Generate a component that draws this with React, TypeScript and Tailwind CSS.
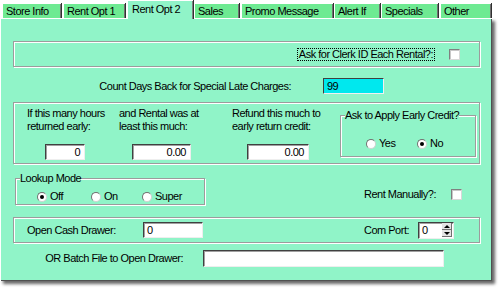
import type { ReactNode } from 'react';

const tabs = [
  { label: 'Store Info', cls: 'ml-[2px] w-[59px]' },
  { label: 'Rent Opt 1', cls: 'ml-[2px] w-[62px]' },
  { label: 'Rent Opt 2', cls: 'ml-[2px] w-[66px]', active: true },
  { label: 'Sales', cls: 'ml-[1px] w-[45px]' },
  { label: 'Promo Message', cls: 'ml-[2px] w-[92px]' },
  { label: 'Alert If', cls: 'ml-[1px] w-[46px]' },
  { label: 'Specials', cls: 'ml-[1px] w-[57px]' },
  { label: 'Other', cls: 'ml-[2px] w-[51px]' },
];

const etched =
  'border border-[#9c9c9c] shadow-[inset_1px_1px_0_#ffffff,1px_1px_0_#ffffff]';

const sunken =
  'bg-white border border-t-[#404040] border-l-[#404040] border-r-[#eeeeee] border-b-[#eeeeee] shadow-[inset_1px_1px_0_#a0a0a0]';

function Field({ value, className, right }: { value: string; className: string; right?: boolean }) {
  return (
    <div className={`${sunken} flex items-center ${right ? 'justify-end pr-[4px]' : 'pl-[3px]'} ${className}`}>
      {value}
    </div>
  );
}

function Check() {
  return (
    <div className="w-[11px] h-[11px] bg-white border border-t-[#808080] border-l-[#808080] border-r-[#d8d8d8] border-b-[#d8d8d8] shadow-[inset_1px_1px_0_#c8c8c8]" />
  );
}

function Radio({ on }: { on?: boolean }) {
  return (
    <div className="w-[10px] h-[10px] rounded-full bg-white border border-t-[#707070] border-l-[#707070] border-r-[#d0d0d0] border-b-[#d0d0d0] flex items-center justify-center">
      {on && <div className="w-[4px] h-[4px] rounded-full bg-black" />}
    </div>
  );
}

function Group({ title, className, children }: { title: string; className: string; children: ReactNode }) {
  return (
    <div className={`relative ${etched} ${className}`}>
      <span className="absolute left-[4px] -top-[7px] bg-[#90f4c8] leading-[13px]">{title}</span>
      {children}
    </div>
  );
}

export default function App() {
  return (
    <div className="w-[502px] h-[292px] bg-white font-['Liberation_Sans',Arial,sans-serif] text-[11px] tracking-[-0.5px] leading-[13px] text-black">
      <div className="w-[492px]">
        {/* tab strip */}
        <div className="flex h-[18px] items-end">
          {tabs.map(t =>
            t.active ? (
              <div
                key={t.label}
                className={`relative z-10 h-[19px] -mb-[1px] self-start bg-[#90f4c8] border-t border-l border-white shadow-[inset_-1px_0_0_#808080,1px_0_0_#303030] pl-[4px] pt-[2px] ${t.cls}`}
              >
                {t.label}
              </div>
            ) : (
              <div
                key={t.label}
                className={`h-[15px] bg-[#6eea92] border-t border-l border-white shadow-[inset_-1px_0_0_#707070,1px_0_0_#303030] pl-[3px] pt-[1px] ${t.cls}`}
              >
                {t.label}
              </div>
            ),
          )}
        </div>

        {/* page */}
        <div className="h-[263px] bg-[#90f4c8] pl-[13px] pr-[12px] pt-[23px] shadow-[inset_1px_1px_0_#ffffff,inset_-1px_-1px_0_#505050,3px_3px_3px_rgba(0,0,0,0.6)]">
          {/* clerk id */}
          <div className={`${etched} h-[26px] flex items-center justify-end pr-[19px]`}>
            <span className="border border-dotted border-black px-[1px] leading-[11px]">
              Ask for Clerk ID Each Rental?:
            </span>
            <div className="ml-[14px]">
              <Check />
            </div>
          </div>

          {/* count days */}
          <div className="mt-[11px] h-[16px] flex items-center">
            <div className="w-[278px] text-right">Count Days Back for Special Late Charges:</div>
            <div className="ml-[32px] w-[61px] h-[16px] bg-[#00e8ee] border border-t-[#404040] border-l-[#404040] border-r-[#f0f0f0] border-b-[#f0f0f0] pl-[3px] flex items-center">
              99
            </div>
          </div>

          {/* early return */}
          <div className={`${etched} mt-[8px] h-[62px] flex pl-[13px] pt-[4px]`}>
            <div className="w-[92px]">
              <div>
                If this many hours
                <br />
                returned early:
              </div>
              <Field value="0" right className="mt-[11px] ml-[18px] w-[40px] h-[16px]" />
            </div>
            <div className="w-[113px]">
              <div>
                and Rental was at
                <br />
                least this much:
              </div>
              <Field value="0.00" right className="mt-[11px] ml-[13px] w-[59px] h-[16px]" />
            </div>
            <div className="w-[108px]">
              <div>
                Refund this much to
                <br />
                early return credit:
              </div>
              <Field value="0.00" right className="mt-[11px] ml-[15px] w-[62px] h-[16px]" />
            </div>
            <Group title="Ask to Apply Early Credit?" className="mt-[8px] w-[136px] h-[42px]">
              <div className="flex items-center pl-[25px] pt-[21px]">
                <div className="w-[51px] flex items-center">
                  <Radio />
                  <span className="ml-[3px]">Yes</span>
                </div>
                <div className="flex items-center">
                  <Radio on />
                  <span className="ml-[3px]">No</span>
                </div>
              </div>
            </Group>
          </div>

          {/* lookup */}
          <div className="mt-[14px] flex">
            <Group title="Lookup Mode" className="ml-[2px] w-[190px] h-[27px]">
              <div className="flex items-center pl-[21px] pt-[11px]">
                <div className="w-[54px] flex items-center">
                  <Radio on />
                  <span className="ml-[3px]">Off</span>
                </div>
                <div className="w-[51px] flex items-center">
                  <Radio />
                  <span className="ml-[3px]">On</span>
                </div>
                <div className="flex items-center">
                  <Radio />
                  <span className="ml-[3px]">Super</span>
                </div>
              </div>
            </Group>
            <div className="ml-auto mt-[11px] h-[11px] flex items-center pr-[18px]">
              <span>Rent Manually?:</span>
              <div className="ml-[15px]">
                <Check />
              </div>
            </div>
          </div>

          {/* cash drawer */}
          <div className={`${etched} mt-[12px] h-[26px] flex items-center pl-[13px] pr-[25px]`}>
            <div className="w-[116px]">Open Cash Drawer:</div>
            <Field value="0" className="w-[60px] h-[16px]" />
            <span className="ml-auto">Com Port:</span>
            <div className={`${sunken} ml-[9px] w-[36px] h-[17px] flex items-center pl-[3px]`}>
              <span className="flex-1">0</span>
              <div className="flex flex-col w-[10px] mr-[1px]">
                <div className="h-[7px] bg-[#e4e4e4] border-r border-b border-[#707070] flex items-center justify-center">
                  <div className="w-0 h-0 border-l-[3px] border-r-[3px] border-b-[3px] border-l-transparent border-r-transparent border-b-black" />
                </div>
                <div className="h-[7px] bg-[#e4e4e4] border-r border-b border-[#707070] flex items-center justify-center">
                  <div className="w-0 h-0 border-l-[3px] border-r-[3px] border-t-[3px] border-l-transparent border-r-transparent border-t-black" />
                </div>
              </div>
            </div>
          </div>

          {/* batch file */}
          <div className="mt-[7px] h-[17px] flex items-center">
            <div className="w-[170px] text-right">OR Batch File to Open Drawer:</div>
            <Field value="" className="ml-[20px] w-[241px] h-[17px]" />
          </div>
        </div>
      </div>
    </div>
  );
}
